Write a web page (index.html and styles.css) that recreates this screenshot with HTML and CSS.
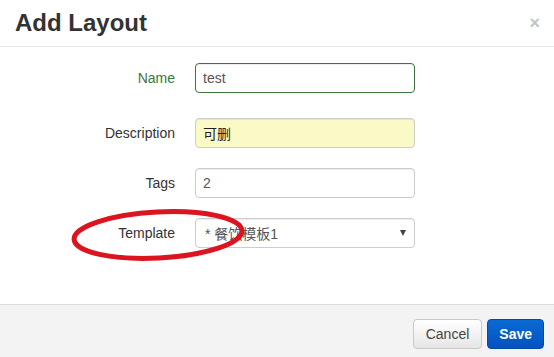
FILE: index.html
```html
<!DOCTYPE html>
<html lang="en">
<head>
    <meta charset="UTF-8">
    <meta name="viewport" content="width=device-width, initial-scale=1.0">
    <title>Add Layout</title>
    <link rel="stylesheet" href="styles.css">
</head>
<body>
    <div class="modal">
        <div class="modal-header">
            <h3>Add Layout</h3>
            <span class="close">&times;</span>
        </div>
        <form class="modal-body">
            <div class="group has-success first">
                <label for="name">Name</label>
                <input type="text" id="name" value="test">
            </div>
            <div class="group">
                <label for="desc">Description</label>
                <input type="text" id="desc" class="filled" value="可删">
            </div>
            <div class="group">
                <label for="tags">Tags</label>
                <input type="text" id="tags" value="2">
            </div>
            <div class="group">
                <label for="template">Template</label>
                <div class="select" id="template">
                    <span>* 餐饮模板1</span>
                    <span class="caret"></span>
                </div>
            </div>
            <svg class="mark" width="190" height="66" viewBox="0 0 190 66">
                <ellipse cx="92" cy="34" rx="84" ry="23" fill="none" stroke="#dc1420" stroke-width="5" transform="rotate(-3 92 34)"/>
            </svg>
        </form>
        <div class="modal-footer">
            <button type="button" class="btn">Cancel</button>
            <button type="button" class="btn btn-primary">Save</button>
        </div>
    </div>
</body>
</html>
```

FILE: styles.css
```css
body {
    margin: 0;
    font-family: "Liberation Sans", Arial, "Noto Sans CJK SC", sans-serif;
    font-size: 14px;
    color: #333;
    background-color: #fff;
}

.modal {
    width: 554px;
    height: 357px;
    display: flex;
    flex-direction: column;
}

.modal-header {
    display: flex;
    align-items: center;
    justify-content: space-between;
    height: 46px;
    padding: 0 15px;
    border-bottom: 1px solid #e8e8e8;
}

.modal-header h3 {
    margin: 0;
    font-size: 24px;
    font-weight: bold;
    color: #333;
}

.close {
    font-size: 18px;
    font-weight: bold;
    color: #c4c4c4;
    margin-right: -1px;
}

.modal-body {
    position: relative;
    flex: 1;
    padding: 16px 15px 0;
    margin: 0;
}

.group {
    display: flex;
    align-items: center;
    margin-bottom: 20px;
}

.group.first {
    margin-bottom: 25px;
}

.group label {
    width: 160px;
    margin-right: 20px;
    text-align: right;
    color: #333;
}

.group input,
.select {
    box-sizing: border-box;
    width: 220px;
    height: 30px;
    padding: 0 7px;
    font-family: inherit;
    font-size: 14px;
    color: #555;
    border: 1px solid #ccc;
    border-radius: 4px;
    background-color: #fff;
    box-shadow: inset 0 1px 1px rgba(0, 0, 0, 0.075);
}

.group input.filled {
    background-color: #fafac6;
    color: #222;
}

.has-success label {
    color: #3c763d;
}

.has-success input {
    border-color: #3c763d;
}

.select {
    display: flex;
    align-items: center;
    justify-content: space-between;
    padding: 0 8px 0 9px;
}

.caret {
    width: 0;
    height: 0;
    border-left: 3px solid transparent;
    border-right: 3px solid transparent;
    border-top: 6px solid #444;
}

.mark {
    position: absolute;
    left: 66px;
    top: 154px;
}

.modal-footer {
    display: flex;
    justify-content: flex-end;
    gap: 5px;
    height: 53px;
    box-sizing: border-box;
    padding: 14px 10px 0;
    background-color: #f3f3f3;
    border-top: 1px solid #dcdcdc;
}

.btn {
    height: 30px;
    padding: 0 12px;
    font-family: inherit;
    font-size: 14px;
    color: #444;
    background: linear-gradient(#ffffff, #e6e6e6);
    border: 1px solid #c8c8c8;
    border-radius: 4px;
}

.btn-primary {
    padding: 0 11px;
    font-weight: bold;
    color: #fff;
    background: linear-gradient(#0a6ad4, #0452be);
    border-color: #0548a8;
}
```
